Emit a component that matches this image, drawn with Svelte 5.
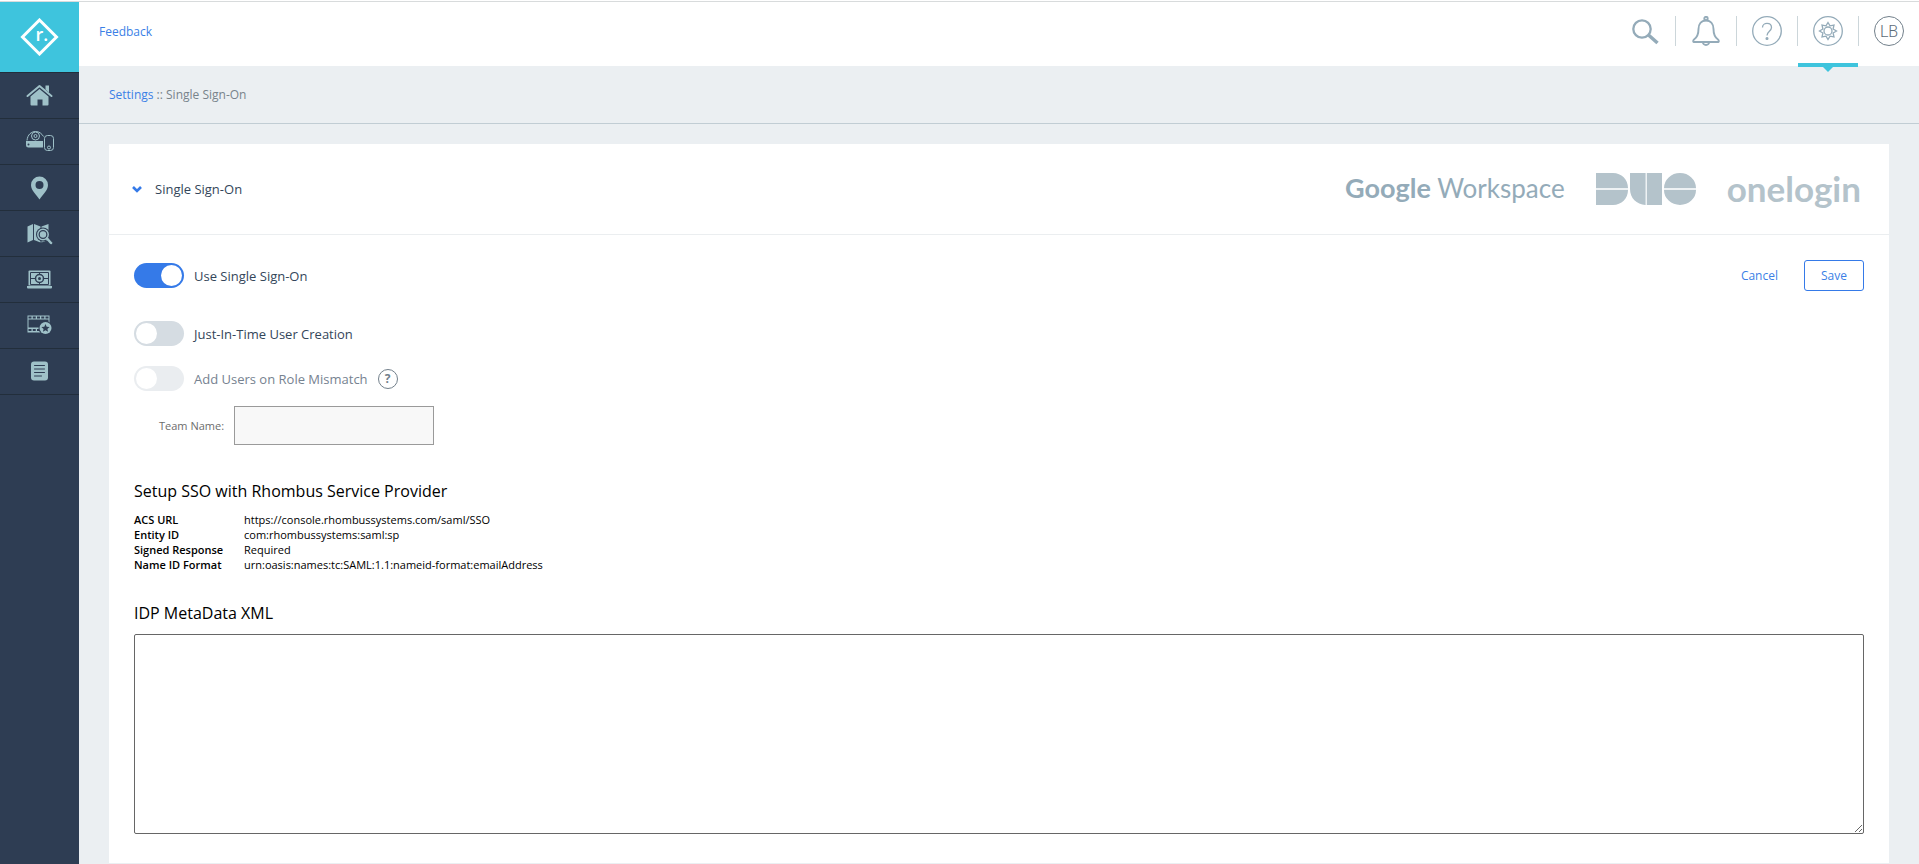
<script lang="ts">
  let useSso = $state(true)
  let justInTime = $state(false)
  let roleMismatch = $state(false)
  let teamName = $state("")
  let metadata = $state("")

  const navItems = ["Home", "Devices", "Locations", "Map", "Console", "Saved Footage", "Reports"]

  const provider = [
    ["ACS URL", "https://console.rhombussystems.com/saml/SSO"],
    ["Entity ID", "com:rhombussystems:saml:sp"],
    ["Signed Response", "Required"],
    ["Name ID Format", "urn:oasis:names:tc:SAML:1.1:nameid-format:emailAddress"],
  ]
</script>

<div class="app">
  <nav class="sidebar">
    <a class="logo" href="#home" aria-label="Rhombus">
      <svg width="39" height="38" viewBox="0 0 39 38">
        <path d="M19.500 2 36.500 19 19.500 36 2.500 19Z" fill="none" stroke="#fff" stroke-width="3" />
        <text x="15.500" y="23" fill="#fff" font-size="18" font-weight="600">r.</text>
      </svg>
    </a>
    {#each navItems as item, i}
      <a class="item" href="#nav" aria-label={item}>
        <svg width="28" height="28" viewBox="0.5 0.5 28 28">
          {#if i === 0}
            <path d="M2 14.500 14 4.500 26 14.500" fill="none" stroke="#9fc1c8" stroke-width="2" stroke-linecap="round" stroke-linejoin="round" />
            <path d="M20 4h3.500v7L20 8Z M5 15l9-7.500 9 7.500v8a1 1 0 0 1-1 1h-5v-6h-5v6H6a1 1 0 0 1-1-1Z" fill="#9fc1c8" />
          {:else if i === 1}
            <g fill="none" stroke="#9fc1c8">
              <path d="M1.500 13C2 7 6 4 10 4s6 2 8 5" />
              <circle cx="10" cy="8.500" r="4" />
              <circle cx="10" cy="8.500" r="1.500" />
              <rect x="19" y="8" width="9" height="15" rx="3" />
              <circle cx="23.500" cy="20" r="1.500" />
            </g>
            <path d="M.5 13.500H17.500V20H3a2.500 2.500 0 0 1-2.500-2.500Z" fill="#9fc1c8" />
            <circle cx="3" cy="17" r="1" fill="#2e3d53" />
          {:else if i === 2}
            <path d="M14 3a8.500 8.500 0 0 0-8.500 8.500C5.500 17 11 21 14 26c3-5 8.500-9 8.500-14.500A8.500 8.500 0 0 0 14 3Zm0 4.500a4 4 0 1 1 0 8 4 4 0 0 1 0-8Z" fill="#9fc1c8" />
          {:else if i === 3}
            <path d="M2 7 7.500 4.500v16L2 23Z M8.500 4.500 15 7v16l-6.500-2.500Z M16 7l7-2.500v16L16 23Z" fill="#9fc1c8" />
            <circle cx="17.500" cy="15" r="7" fill="#2e3d53" />
            <circle cx="17.500" cy="15" r="5.200" fill="#2e3d53" stroke="#9fc1c8" stroke-width="1.500" />
            <circle cx="17.500" cy="15" r="3.200" fill="#9fc1c8" />
            <path d="m21.500 19 4 4.500" stroke="#9fc1c8" stroke-width="2.500" stroke-linecap="round" />
          {:else if i === 4}
            <path d="M4 5h20a1 1 0 0 1 1 1v14H3V6a1 1 0 0 1 1-1Z" fill="#9fc1c8" />
            <path d="M5 7h18v12H5Z" fill="none" stroke="#2e3d53" />
            <path d="M14 7v12M5 13h18" stroke="#2e3d53" />
            <circle cx="14" cy="13" r="4" fill="#9fc1c8" stroke="#2e3d53" stroke-width="1.500" />
            <circle cx="14" cy="13" r="1.500" fill="#2e3d53" />
            <path d="M1.500 20.500h25V22a1 1 0 0 1-1 1h-23a1 1 0 0 1-1-1Z" fill="#9fc1c8" />
          {:else if i === 5}
            <path d="M2 4h22v17H2Z" fill="#9fc1c8" />
            <path d="M3 8h20v8H3Z" fill="#2e3d53" />
            <path d="M3 6h20M3 18.500h20" stroke="#2e3d53" stroke-width="2" stroke-dasharray="3 1.250" />
            <circle cx="20" cy="16.500" r="7" fill="#2e3d53" />
            <circle cx="20" cy="16.500" r="6" fill="#9fc1c8" />
            <path d="m20 12.500 1.200 2.700 2.900.3-2.200 1.900.7 2.900-2.600-1.500-2.600 1.500.7-2.900-2.200-1.900 2.900-.3Z" fill="#2e3d53" />
          {:else}
            <rect x="5.500" y="4" width="17" height="19" rx="3" fill="#9fc1c8" />
            <path d="M9 8h10M9 11.500h10M9 15h10M9 18.500h7" stroke="#2e3d53" stroke-linecap="round" />
          {/if}
        </svg>
      </a>
    {/each}
  </nav>

  <div class="main">
    <header class="topbar">
      <a class="feedback" href="#feedback">Feedback</a>
      <div class="tools">
        <button class="tool" aria-label="Search">
          <svg width="30" height="30" viewBox="0 0 30 30" fill="none" stroke="#94abb9">
            <circle cx="12" cy="13" r="8.700" stroke-width="2.300" />
            <path d="m18.500 19 9 8" stroke-width="3.500" />
          </svg>
        </button>
        <button class="tool" aria-label="Notifications">
          <svg width="30" height="30" viewBox="0 0 30 30" fill="none" stroke="#94abb9" stroke-width="1.900" stroke-linejoin="round">
            <circle cx="15" cy="2.500" r="1.700" />
            <path d="M15 4.500c-5 0-7.500 4-7.500 8.500 0 6-1.500 8.500-4.500 10.500-1 .7-1 2.500-.3 2.500h24.600c.7 0 .7-1.800-.3-2.500-3-2-4.500-4.500-4.500-10.500 0-4.500-2.500-8.500-7.500-8.500ZM11.800 26c.5 4 5.900 4 6.400 0" />
          </svg>
        </button>
        <button class="tool" aria-label="Help">
          <svg width="30" height="30" viewBox="0 0 30 30" fill="none" stroke="#94abb9" stroke-width="1.300">
            <circle cx="15" cy="15" r="14.300" />
            <path d="M10.500 11.500c0-5.500 9-5.500 9 0 0 3.500-4.500 4-4.500 8" />
            <circle cx="15" cy="22.500" r=".9" fill="#94abb9" />
          </svg>
        </button>
        <button class="tool active" aria-label="Settings">
          <svg width="30" height="30" viewBox="0 0 30 30" fill="none" stroke="#94abb9" stroke-width="1.300">
            <circle cx="15" cy="15" r="14.300" />
            <circle cx="15" cy="15" r="4" />
            <path d="m15 6.500 2 3.300 4-.8-.9 4 3.400 2-3.400 2 .9 4-4-.8-2 3.300-2-3.300-4 .8.900-4-3.400-2 3.400-2-.9-4 4 .8Z" />
          </svg>
        </button>
        <button class="tool">
          <span class="avatar">LB</span>
        </button>
      </div>
    </header>

    <div class="crumbs">
      <a href="#settings">Settings</a> :: Single Sign-On
    </div>

    <main class="card">
      <div class="card-head">
        <button class="collapse">
          <svg width="10" height="10" viewBox="0 0 10 10" fill="none" stroke="#357ae8" stroke-width="2.600">
            <path d="m1 3 4 4 4-4" />
          </svg>
          <span>Single Sign-On</span>
        </button>
        <div class="brands">
          <span class="google"><b>Google</b> Workspace</span>
          <svg width="100" height="32" viewBox="0 0 100 32" fill="#b4c3cb" role="img" aria-label="Duo">
            <path fill="#eef2f4" d="M0 14h32v4H0ZM48 0h4v32h-4ZM68 14h32v4H68Z" />
            <path d="M0 0h17c8.500 0 15 6.500 15 15H0ZM0 17h32c0 8.500-6.500 15-15 15H0Z" />
            <path d="M34 0h15.500v32C40.500 31.500 34 25 34 16ZM51 0h15v32H51Z" />
            <path d="M68 15a16 15 0 0 1 32 0ZM68 17a16 15 0 0 0 32 0Z" />
          </svg>
          <span class="onelogin">onelogin</span>
        </div>
      </div>

      <form class="card-body" onsubmit={e => e.preventDefault()}>
        <div class="row first">
          <label class="toggle">
            <input type="checkbox" bind:checked={useSso}>
            <span>Use Single Sign-On</span>
          </label>
          <div class="actions">
            <button class="cancel" type="button">Cancel</button>
            <button class="save" type="submit">Save</button>
          </div>
        </div>
        <label class="toggle">
          <input type="checkbox" bind:checked={justInTime}>
          <span>Just-In-Time User Creation</span>
        </label>
        <div class="row mismatch">
          <label class="toggle disabled">
            <input type="checkbox" disabled bind:checked={roleMismatch}>
            <span>Add Users on Role Mismatch</span>
          </label>
          <button class="hint" type="button">?</button>
        </div>
        <div class="team">
          <label for="team">Team Name:</label>
          <input id="team" type="text" disabled bind:value={teamName}>
        </div>

        <h2>Setup SSO with Rhombus Service Provider</h2>
        <table>
          <tbody>
            {#each provider as [name, value]}
              <tr>
                <th scope="row">{name}</th>
                <td>{value}</td>
              </tr>
            {/each}
          </tbody>
        </table>

        <h2><label for="metadata">IDP MetaData XML</label></h2>
        <textarea id="metadata" bind:value={metadata}></textarea>
      </form>
    </main>
  </div>
</div>

<style>
  :global(body) {
    background: #ebeff2;
  }

  .app {
    display: flex;
    box-sizing: border-box;
    min-height: 100vh;
    padding-top: 1px;
    background: linear-gradient(#fff 1px, #ebeff2 1px);
    font-family: "Open Sans", sans-serif;
    font-size: 12px;
    line-height: 18px;
    color: #78838b;
  }

  a {
    color: #3b7fe6;
    text-decoration: none;
  }

  button {
    padding: 0;
    border: 0;
    background: none;
    font: inherit;
    cursor: pointer;
  }

  svg {
    display: block;
  }

  .sidebar {
    flex: none;
    width: 79px;
    border-top: 1px solid #d8dbdc;
    background: #2e3d53;
  }

  .logo,
  .item {
    display: flex;
    align-items: center;
    justify-content: center;
    border-bottom: 1px solid #222e3b;
  }

  .logo {
    height: 70px;
    background: #3ec4dd;
  }

  .item {
    height: 45px;
  }

  .main {
    flex: 1;
    min-width: 0;
  }

  .topbar {
    display: flex;
    align-items: flex-start;
    justify-content: space-between;
    height: 64px;
    border-top: 1px solid #d8dbdc;
    padding-left: 20px;
    background: #fff;
  }

  .feedback {
    margin-top: 21px;
  }

  .tools {
    display: flex;
    padding-top: 14px;
  }

  .tool {
    position: relative;
    display: flex;
    justify-content: center;
    width: 60px;
    height: 30px;
  }

  .tool + .tool {
    width: 61px;
    border-left: 1px solid #ccd6da;
  }

  .active::before {
    content: "";
    position: absolute;
    top: 47px;
    left: 0;
    width: 100%;
    height: 4px;
    background: #3ec4dd;
  }

  .active::after {
    content: "";
    position: absolute;
    top: 51px;
    left: 25px;
    border: 5px solid transparent;
    border-top-color: #3ec4dd;
    border-bottom: 0;
  }

  .avatar {
    box-sizing: border-box;
    width: 30px;
    height: 30px;
    border: 1px solid #72808b;
    border-radius: 50%;
    font-family: Roboto, sans-serif;
    font-size: 16px;
    font-weight: 300;
    line-height: 29px;
    color: #5d6c79;
  }

  .crumbs {
    padding: 20px 30px 19px;
    border-bottom: 1px solid #c1cdd4;
  }

  .card {
    margin: 20px 30px 0;
    background: #fff;
  }

  .card-head {
    display: flex;
    align-items: center;
    justify-content: space-between;
    height: 90px;
    padding: 0 28px 0 23px;
    border-bottom: 1px solid #ebeef0;
  }

  .collapse {
    display: flex;
    align-items: center;
    gap: 13px;
    font-size: 13px;
    color: #34465a;
  }

  .brands {
    display: flex;
    align-items: center;
    gap: 31px;
  }

  .google,
  .onelogin {
    font-family: Lato, sans-serif;
    line-height: 32px;
    padding-bottom: 2px;
  }

  .google {
    font-size: 26px;
    color: #94abb9;
  }

  .google b {
    font-size: 27px;
    font-weight: 700;
  }

  .onelogin {
    font-size: 35px;
    font-weight: 700;
    color: #b4c3cb;
  }

  .card-body {
    padding: 25px 25px 29px;
  }

  .row {
    display: flex;
    align-items: center;
  }

  .first {
    justify-content: space-between;
    margin-bottom: 30px;
  }

  .toggle {
    display: flex;
    align-items: center;
    gap: 10px;
    font-size: 13px;
    color: #34465a;
  }

  .toggle input {
    appearance: none;
    width: 50px;
    height: 25px;
    margin: 0;
    padding: 2px;
    box-sizing: border-box;
    border-radius: 13px;
    background: #d5dce2;
  }

  .toggle input::before {
    content: "";
    display: block;
    width: 21px;
    height: 21px;
    border-radius: 50%;
    background: #fff;
  }

  .toggle input:checked {
    background: #357ae8;
  }

  .toggle input:checked::before {
    margin-left: auto;
  }

  .disabled {
    color: #768290;
  }

  .disabled input {
    background: #eaedf0;
  }

  .actions {
    display: flex;
    align-items: center;
    gap: 26px;
  }

  .cancel,
  .save {
    color: #3b7fe6;
  }

  .save {
    width: 60px;
    height: 31px;
    border: 1px solid #357ae8;
    border-radius: 3px;
  }

  .mismatch {
    gap: 10px;
    margin-top: 20px;
  }

  .hint {
    width: 20px;
    height: 20px;
    border: 1px solid #72808b;
    border-radius: 50%;
    font-size: 12px;
    font-weight: 700;
    line-height: 18px;
    color: #72808b;
  }

  .team {
    display: flex;
    align-items: center;
    gap: 10px;
    margin: 15px 0 0 25px;
    padding-bottom: 5px;
    font-size: 11px;
    color: #6c6c6c;
  }

  .team input {
    box-sizing: border-box;
    width: 200px;
    height: 39px;
    border: 1px solid #9a9a9a;
    background: #f8f8f8;
  }

  h2 {
    margin: 29px 0 9px;
    font-size: 16px;
    font-weight: 400;
    line-height: 24px;
    color: #000;
  }

  table {
    border-collapse: collapse;
    font-size: 11px;
    line-height: 15px;
    color: #000;
  }

  th,
  td {
    padding: 0;
    text-align: left;
  }

  th {
    width: 110px;
    font-weight: 600;
  }

  textarea {
    display: block;
    box-sizing: border-box;
    width: 100%;
    height: 200px;
    border: 1px solid #666;
    border-radius: 2px;
  }
</style>
